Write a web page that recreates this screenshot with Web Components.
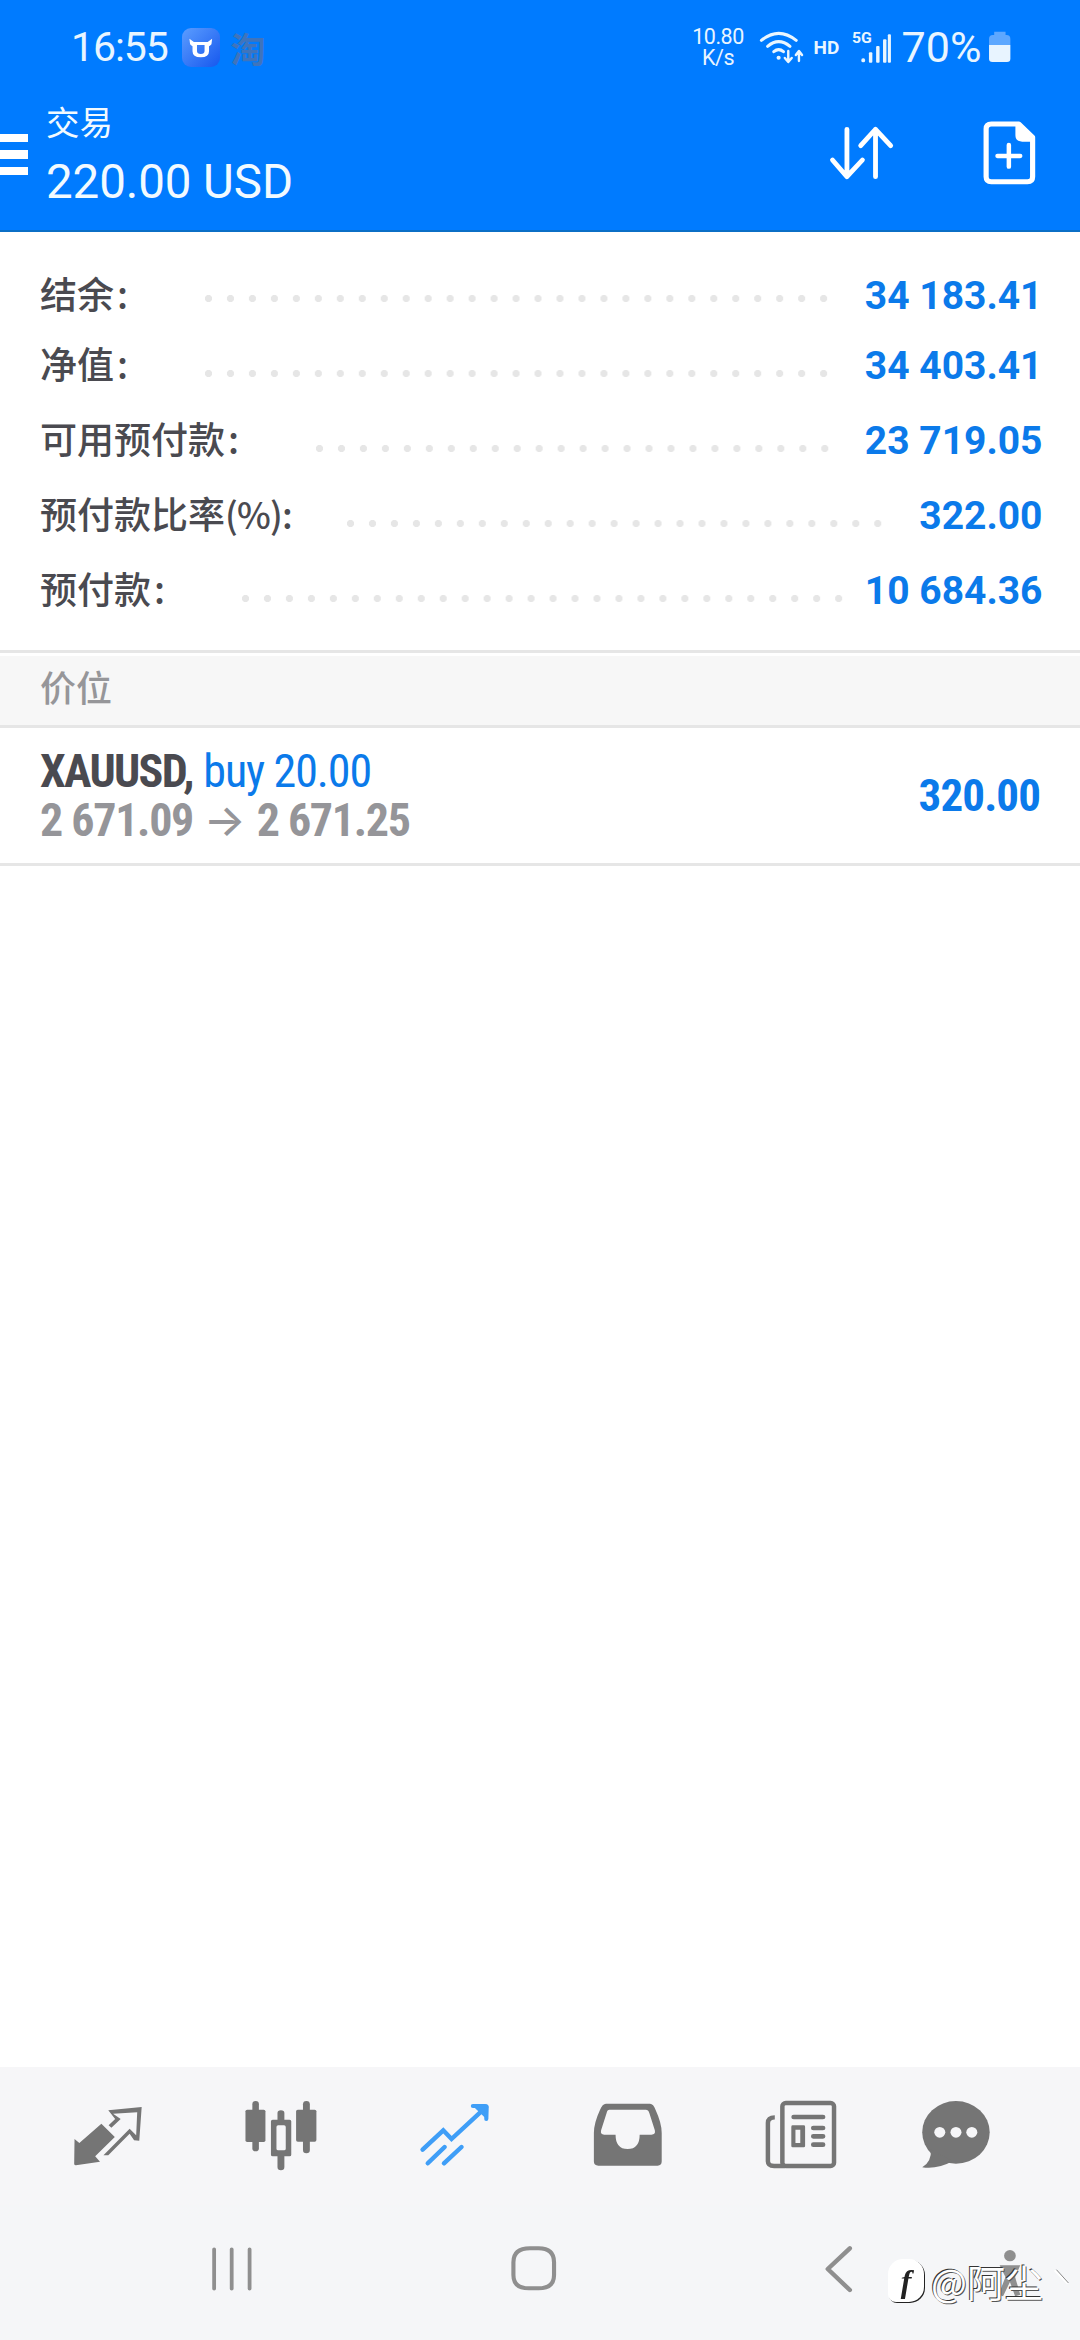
<!DOCTYPE html>
<html lang="zh"><head><meta charset="utf-8"><title>交易</title>
<style>
html,body{margin:0;padding:0;background:#fff}
body{width:1080px;height:2340px;overflow:hidden;font-family:Roboto,"Noto Sans CJK SC",sans-serif}
</style></head><body>
<trade-screen>
  <account-row label="结余" tail=":" value="34 183.41" dots="29" start="77" shift="3.3" tall="65"></account-row>
  <account-row label="净值" tail=":" value="34 403.41" dots="29" start="77" shift="8.3"></account-row>
  <account-row label="可用预付款" tail=":" value="23 719.05" dots="24" start="77" shift="8.3"></account-row>
  <account-row label="预付款比率" tail="(%):" value="322.00" dots="25" start="55" shift="8.3"></account-row>
  <account-row label="预付款" tail=":" value="10 684.36" dots="28" start="77" shift="8.3"></account-row>
</trade-screen>
<script>
function def(name, html, init){
  customElements.define(name, class extends HTMLElement{
    constructor(){super();const r=this.attachShadow({mode:'open'});r.innerHTML=html;}
    connectedCallback(){ if(init) init(this,this.shadowRoot); }
  });
}
const ICON='#757575';
const svgBox=(vb,inner)=>{
  const p=vb.split(' ').map(Number);
  return `<svg xmlns="http://www.w3.org/2000/svg" viewBox="${vb}" preserveAspectRatio="none" width="${p[2]/2.904}" height="${p[3]/3}" style="display:block;flex:none">${inner}</svg>`;
};

def('status-bar',`<style>
:host{display:flex;align-items:center;height:94px;color:#e9f5ff;font-family:Roboto,"Noto Sans CJK SC",sans-serif}
.time{margin-left:71px;font-size:41px;letter-spacing:-1.1px;line-height:1}
.app{margin-left:14px;width:38px;height:39px;border-radius:9px;background:linear-gradient(135deg,#5b9dff,#1658ee);display:flex;align-items:center;justify-content:center}
.tao{margin-left:11px;font-size:35px;line-height:1;color:#3f74bc;font-weight:700;font-family:"Noto Sans CJK SC",sans-serif}
.fill{flex:1}
.speed{width:56px;text-align:center;font-size:21.5px;line-height:21px;letter-spacing:-.5px}
.wifi{margin-left:13px}
.hd{margin-left:8px;font-size:19px;font-weight:700;color:#eaf6ff}
.sig{margin-left:12px}
.pct{margin-left:9px;font-size:43px;line-height:1}
.bat{margin-left:7px;margin-right:68.5px}
</style>
<span class="time">16:55</span>
<span class="app">${svgBox('0 0 80 80','<path d="M7 14 L20 24 H60 L73 14 L71 31 Q67 36 64 37 V52 Q64 70 40 70 Q16 70 16 52 V37 Q13 36 9 31Z M29 33 V51 Q29 60 40 60 Q51 60 51 51 V33Z" fill="#fff" fill-rule="evenodd"/>')}</span>
<span class="tao">淘</span><span class="fill"></span>
<span class="speed">10.80<br>K/s</span>
<span class="wifi">${svgBox('625 85 135 105',`<g fill="none" stroke="#eaf6ff" stroke-width="9" stroke-linecap="round"><path d="M632 116Q682 74 733 116"/><path d="M650 134Q682 106 715 134"/><path d="M668 150Q682 138 696 150"/></g><circle cx="682" cy="168" r="6" fill="#eaf6ff"/><path d="M710 148V178M700 169L710 181L720 169M741 178V150M732 160L741 148L750 160" fill="none" stroke="#eaf6ff" stroke-width="7" stroke-linecap="round" stroke-linejoin="round"/>`)}</span>
<span class="hd">HD</span>
<span class="sig">${svgBox('895 90 120 100',`<text x="898" y="130" font-size="46" font-weight="700" font-family="Roboto" fill="#eaf6ff">5G</text><g fill="#eaf6ff"><rect x="925" y="175" width="11" height="12" rx="5"/><rect x="947" y="157" width="10" height="31" rx="3"/><rect x="968" y="138" width="10" height="50" rx="3"/><rect x="988" y="118" width="10" height="70" rx="3"/><rect x="1002" y="103" width="9" height="85" rx="3"/></g>`)}</span>
<span class="pct">70%</span>
<span class="bat">${svgBox('1298 94 67 95',`<path d="M1316 96H1349V106H1352Q1363 106 1363 118V136H1301V118Q1301 106 1312 106H1316Z" fill="#5da7ff"/><path d="M1301 136H1363V177Q1363 187 1353 187H1311Q1301 187 1301 177Z" fill="#e8f4ff"/>`)}</span>`);

def('app-toolbar',`<style>
:host{display:flex;align-items:center;height:136px;color:#f2faff;border-bottom:2px solid #0b6fc6}
.menu{width:28px;height:41px;display:flex;flex-direction:column;justify-content:space-between;margin-top:-15px}
.menu i{display:block;height:8.4px;background:#fff}
.titles{margin-left:18px;display:flex;flex-direction:column;margin-top:-16px}
.t1{font:400 33.5px/44px "Noto Sans CJK SC",sans-serif}
.t2{font:400 47.5px/54px Roboto,sans-serif;margin-top:12px;letter-spacing:-.1px}
.fill{flex:1}
.a{margin-right:86.5px;margin-top:-18px}
.b{margin-right:44px;margin-top:-18px}
</style>
<div class="menu"><i></i><i></i><i></i></div>
<div class="titles"><span class="t1">交易</span><span class="t2">220.00 USD</span></div>
<span class="fill"></span>
<span class="a">${svgBox('835 375 195 170',`<path d="M890 388V530M848 480L890 530L935 480M973 530V388M930 437L973 388L1017 437" fill="none" stroke="#fff" stroke-width="14" stroke-linecap="round" stroke-linejoin="round"/>`)}</span>
<span class="b">${svgBox('1278 360 158 198',`<path d="M1305 372H1385L1425 412V530Q1425 545 1410 545H1305Q1290 545 1290 530V387Q1290 372 1305 372Z" fill="none" stroke="#fff" stroke-width="15" stroke-linejoin="round"/><path d="M1375 372V405Q1375 425 1395 425H1428L1385 372Z" fill="#fff"/><path d="M1323 468H1389M1356 435V500" stroke="#fff" stroke-width="13" stroke-linecap="round"/>`)}</span>`);

def('dot-leader',`<style>
:host{display:block;height:7px;background:radial-gradient(circle at 3.5px 3.5px,#e6e6e6 3.3px,transparent 3.9px) 0 0/21.98px 7px repeat-x}
</style>`);

def('account-row',`<style>
:host{display:flex;align-items:center;height:75px;padding:0 37.5px 0 40px}
.l{font:500 37px/1 "Noto Sans CJK SC",sans-serif;color:#4a4a50;white-space:pre;margin-top:-3px}
.t{margin-left:3px}.t.long{margin-left:0;font-size:36px;letter-spacing:-.8px}
.v{margin-left:auto;font:700 39px/1 Roboto,sans-serif;font-stretch:88%;color:#0b7aea;white-space:pre;margin-top:2px}
dot-leader{flex:none}
</style><span class="l"><span class="n"></span><span class="t"></span></span><dot-leader></dot-leader><span class="v"></span>`,(el,r)=>{
  r.querySelector('.n').textContent=el.getAttribute('label');
  const t=r.querySelector('.t'),tv=el.getAttribute('tail');
  t.textContent=tv; if(tv.length>1) t.classList.add('long');
  r.querySelector('.v').textContent=el.getAttribute('value');
  const d=r.querySelector('dot-leader'),n=+el.getAttribute('dots');
  d.style.width=(n*22-15)+'px';
  d.style.marginLeft=el.getAttribute('start')+'px';
  d.style.marginTop=(2*el.getAttribute('shift'))+'px';
  if(el.hasAttribute('tall')) el.style.height=el.getAttribute('tall')+'px';
});

def('section-head',`<style>
:host{display:flex;align-items:center;height:59px;padding:0 40px 10px;background:#f7f7f7;border-top:3px solid #fff;border-bottom:3px solid #e6e6e6;font:500 36px/1 "Noto Sans CJK SC",sans-serif;color:#969699}
</style><slot></slot>`);

def('position-row',`<style>
:host{display:flex;align-items:center;height:135px;padding:0 40px;border-bottom:3px solid #e6e6e6;font-family:Roboto,sans-serif;font-stretch:75%}
.lines{display:flex;flex-direction:column;margin-top:1px}
.top,.bot{font-size:46px;line-height:49.5px;white-space:pre}
.s{letter-spacing:-1.7px}.b{letter-spacing:-1.1px}.bot{letter-spacing:-1.3px}
.s{font-weight:700;color:#4a4a50}.b{color:#0b7aea}
.bot{font-weight:700;color:#959599}
.ar{font-family:Inter,sans-serif;font-size:44px;font-weight:500;font-stretch:100%;letter-spacing:0;line-height:1;margin:0 1.5px}
.v{margin-left:auto;font:700 45px/1 Roboto,sans-serif;font-stretch:75%;letter-spacing:-.9px;color:#0b7aea}
</style><div class="lines"><div class="top"><span class="s">XAUUSD,</span> <span class="b">buy 20.00</span></div><div class="bot">2 671.09 <span class="ar">→</span> 2 671.25</div></div><span class="v">320.00</span>`);

def('tab-bar',`<style>
:host{display:grid;grid-template-columns:repeat(6,173px);height:138px;padding:0 0 0 21.5px;background:#f6f6f8;align-items:start}
span{display:flex;justify-content:center;padding-top:21px}
.last{padding-right:36px}
</style>
<span>${svgBox('170 85 290.4 290.4',`<path d="M218 238L232 250L296 192L335 232L278 290L292 306L222 317Q217 317 217 312Z" fill="${ICON}"/><path d="M316 152L413 142L406 243L391 242L378 222L316 287L302 287L378 207L397 227L400 158L330 162L352 178L325 204L317 197L336 178Z" fill="${ICON}"/>`)}</span>
<span>${svgBox('671 85 290.4 290.4',`<g fill="${ICON}"><rect x="713" y="150" width="58" height="97" rx="5"/><rect x="733" y="124" width="19" height="151" rx="9.5"/><rect x="860" y="150" width="59" height="96" rx="5"/><rect x="880" y="124" width="20" height="157" rx="10"/><path fill-rule="evenodd" d="M792 180H806V160Q806 152 816 152Q826 152 826 160V180H841Q846 180 846 185V285Q846 290 841 290H826V322Q826 332 816 332Q806 332 806 322V290H792Q787 290 787 285V185Q787 180 792 180ZM808 197Q803 197 803 202V267Q803 272 808 272H825Q830 272 830 267V202Q830 197 825 197Z"/></g>`)}</span>
<span>${svgBox('1174 85 290.4 290.4',`<path d="M1228 270L1288 212L1312 238L1408 146" fill="none" stroke="#3f9ef7" stroke-width="13" stroke-linecap="round" stroke-linejoin="miter"/><path d="M1374 139H1410Q1416 139 1414 145L1413 178" fill="#3f9ef7" stroke="#3f9ef7" stroke-width="12" stroke-linecap="round" stroke-linejoin="round"/><path d="M1243 311L1292 262M1290 311L1341 262" stroke="#3f9ef7" stroke-width="13" stroke-linecap="round"/>`)}</span>
<span>${svgBox('106 85 290.4 290.4',`<path fill="${ICON}" fill-rule="evenodd" d="M190 132H318Q328 132 334 150Q352 190 352 220V305Q352 318 340 318H168Q155 318 155 305V220Q155 190 173 150Q180 132 190 132ZM200 150Q194 150 192 160L176 212Q173 225 185 225H218Q218 268 253 268Q288 268 288 225H322Q335 225 332 212L316 160Q313 150 306 150Z"/>`)}</span>
<span>${svgBox('610 85 290.4 290.4',`<g fill="none" stroke="${ICON}" stroke-width="13"><rect x="704" y="130" width="150" height="189" rx="10"/><path d="M682 173Q662 173 662 190V305Q662 319 680 319H712"/></g><path d="M737 172H822M794 205H822M794 230H822M794 255H822" stroke="${ICON}" stroke-width="14" stroke-linecap="round"/><path fill="${ICON}" fill-rule="evenodd" d="M734 197H766Q770 197 770 201V259Q770 263 766 263H734Q730 263 730 259V201Q730 197 734 197ZM742 210V250H756V210Z"/>`)}</span>
<span class="last">${svgBox('1057 85 290.4 290.4',`<ellipse cx="1205" cy="218" rx="98" ry="94" fill="${ICON}"/><path d="M1132 270Q1135 305 1107 323Q1150 330 1195 305Z" fill="${ICON}"/><g fill="#f6f6f8"><circle cx="1158" cy="218" r="16"/><circle cx="1205" cy="218" r="16"/><circle cx="1251" cy="218" r="16"/></g>`)}</span>`);

def('nav-bar',`<style>
:host{display:flex;position:relative;height:135px;background:#f5f6f8;align-items:flex-start;padding-top:40px;box-sizing:border-box}
.r{margin-left:210px}.h{margin-left:258px}.c{margin-left:266px}
.wm{position:absolute;left:888px;top:54px;display:flex;align-items:center;gap:7px;font:400 38px/1 "Noto Sans CJK SC",sans-serif;color:#fff;text-shadow:-1px -1px 0 #333,1px 1px 0 #555;white-space:nowrap}
.logo{width:36px;height:43px;background:#fff;border-radius:15px 15px 15px 8px;display:flex;align-items:center;justify-content:center;font:italic 700 32px/1 "Liberation Serif",serif;color:#222;text-shadow:none;filter:drop-shadow(1.5px 1.5px 0 #222)}
.tick{position:absolute;left:1053px;top:62px}
.me{position:absolute;left:991px;top:42px}
</style>
<span class="r">${svgBox('610 555 125 140',`<path d="M622 568V686M673 568V686M725 568V686" stroke="#8f8f8f" stroke-width="11" stroke-linecap="round"/>`)}</span>
<span class="h">${svgBox('1485 558 135 140',`<path d="M1540 568H1565Q1610 568 1610 610V648Q1610 688 1565 688H1537Q1492 688 1492 648V610Q1492 568 1540 568Z" fill="none" stroke="#8f8f8f" stroke-width="12"/>`)}</span>
<span class="c">${svgBox('820 555 90 145',`<path d="M895 565L831 627L895 690" fill="none" stroke="#8f8f8f" stroke-width="13" stroke-linecap="round" stroke-linejoin="round"/>`)}</span>
<span class="me">${svgBox('1310 560 110 155',`<circle cx="1365" cy="586" r="17" fill="#8f8f8f"/><path d="M1335 615H1395L1380 650L1395 703L1380 708L1365 665L1345 708L1332 703L1352 650Z" fill="#8f8f8f"/>`)}</span>
<div class="wm"><span class="logo">f</span><span>@阿尘</span></div>
<span class="tick">${svgBox('1490 620 50 60',`<path d="M1495 630L1533 670" stroke="#fff" stroke-width="6"/><path d="M1500 628L1535 668" stroke="#555" stroke-width="2"/>`)}</span>`);

def('trade-screen',`<style>
:host{display:flex;flex-direction:column;height:2340px;background:#fff}
header{background:#007bff;flex:none}
.acct{flex:none;padding:30.5px 0 22.5px;border-bottom:3px solid #e6e6e6}
.sp{flex:1}
</style>
<header><status-bar></status-bar><app-toolbar></app-toolbar></header>
<div class="acct"><slot></slot></div>
<section-head>价位</section-head>
<position-row></position-row>
<div class="sp"></div>
<tab-bar></tab-bar><nav-bar></nav-bar>`);
</script>
</body></html>
